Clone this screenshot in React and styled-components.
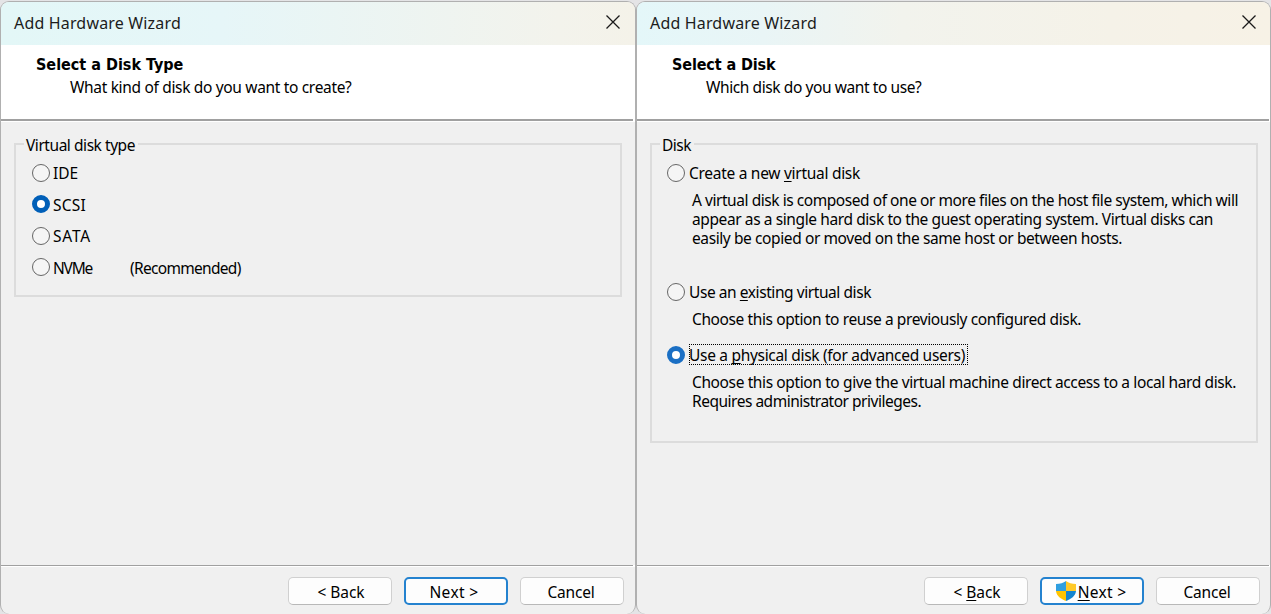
import React from "react";
import styled, { createGlobalStyle } from "styled-components";

const Global = createGlobalStyle`
  * { box-sizing: border-box; }
  body { margin: 0; background: #e4e4e6; overflow: hidden; }
  p, h1, h2 { margin: 0; font-weight: 400; }
`;

const Desktop = styled.main`
  display: flex;
  height: 614px;
  padding-top: 1px;
  color: #000;
  font: 15.5px/19px "Noto Sans", "Open Sans", sans-serif;
  white-space: nowrap;
`;

const Window = styled.section`
  width: ${(p) => p.$width}px;
  height: 613px;
  display: flex;
  flex-direction: column;
  border: 1px solid #b0b0b0;
  border-bottom: 0;
  border-radius: 9px;
  background: #f0f0f0;
  overflow: hidden;
`;

const TitleBar = styled.header`
  height: 43px;
  flex: none;
  display: flex;
  align-items: center;
  padding: 0 0 3px 13px;
  background: ${(p) => p.$tint};
`;

const Title = styled.h1`
  width: 591px;
  padding-top: 1px;
  font-size: 16px;
  line-height: 20px;
  letter-spacing: 0.17px;
  color: #1c1c1c;
`;

const Heading = styled.div`
  height: 74px;
  flex: none;
  padding: 10px 0 0 35px;
  background: #fff;
`;

const Rule = styled.div`
  flex: none;
  width: 634px;
  height: ${(p) => p.$size + 1}px;
  border-right: 2px solid #fff;
  border-bottom: 1px solid #fff;
  background: #a0a0a0;
`;

const HeadingTitle = styled.h2`
  font: 700 16px/19px "DejaVu Sans Condensed", "DejaVu Sans", sans-serif;
  letter-spacing: ${(p) => p.$track || 0}px;
`;

const HeadingText = styled.p`
  padding: 4px 0 0 34px;
  letter-spacing: ${(p) => p.$track}px;
`;

const Body = styled.div`
  flex: 1;
  padding: 13px 12px 0 13px;
`;

const Group = styled.fieldset`
  width: 608px;
  height: ${(p) => p.$height}px;
  min-width: 0;
  margin: 0;
  padding: 0;
  border: 2px solid #dcdcdc;
`;

const Legend = styled.legend`
  height: 18px;
  line-height: 20px;
  margin-left: 8px;
  padding: 0 3px 0 2px;
  letter-spacing: ${(p) => p.$track}px;
`;

const Stack = styled.div`
  display: flex;
  flex-direction: column;
  padding: 10px 0 0 ${(p) => p.$left}px;
  gap: ${(p) => p.$gap || 0}px;
`;

const Option = styled.label`
  display: flex;
  align-items: center;
  height: 19px;
`;

const OptionText = styled.span`
  letter-spacing: ${(p) => p.$track}px;
  margin: ${(p) => p.$top || 1}px 0 0 ${(p) => p.$left || 3}px;
`;

const FocusText = styled(OptionText)`
  height: 21px;
  line-height: 22px;
  width: 279px;
  margin: 0 0 0 4px;
  outline: 1px dotted #000;
  outline-offset: -1px;
`;

const Note = styled.span`
  margin: 2px 0 0 38px;
  letter-spacing: -0.7px;
`;

const Radio = styled.i`
  width: 18px;
  height: 18px;
  flex: none;
  border-radius: 50%;
  border: ${(p) => (p.$on ? "5px solid " + p.$on : "1px solid #666")};
  background: ${(p) => (p.$on ? "#fff" : "#f5f5f5")};
`;

const Description = styled.div`
  padding: 9px 0 ${(p) => p.$bottom}px 25px;
`;

const Line = styled.p`
  height: 19px;
  letter-spacing: ${(p) => p.$track}px;
`;

const Key = styled.span`
  text-decoration: underline;
  text-decoration-thickness: 1px;
  text-underline-offset: 2px;
  text-decoration-skip-ink: none;
`;

const Footer = styled.footer`
  height: 47px;
  flex: none;
  display: flex;
  gap: 12px;
  padding: 10px 0 0 287px;
`;

const Button = styled.button`
  width: 104px;
  height: 28px;
  flex: none;
  display: flex;
  align-items: center;
  justify-content: center;
  gap: 2px;
  margin: 0;
  padding: 2px ${(p) => p.$right || 0}px 0 ${(p) => p.$left || 0}px;
  border: ${(p) => (p.$primary ? "2px solid #2482cf" : "1px solid #d0d0d0")};
  ${(p) => !p.$primary && "border-bottom-color: #b8b8b8;"}
  border-radius: 5px;
  background: #fdfdfd;
  color: #000;
  font: inherit;
  letter-spacing: ${(p) => p.$track}px;
`;

const Icon = styled.svg`
  display: block;
  flex: none;
`;

const ShieldIcon = styled(Icon)`
  margin-bottom: 2px;
`;

const CloseIcon = () => (
  <Icon width="16" height="16" viewBox="0 0 16 16" fill="none" stroke="#1a1a1a" strokeWidth="1.3">
    <path d="M1.500 1.500 14.500 14.500M14.500 1.500 1.500 14.500" />
  </Icon>
);

const Shield = () => (
  <ShieldIcon width="20" height="20" viewBox="0 0 20 20">
    <path d="M10 0C7.500 2 4 3 0 3v7h10z" fill="#2f9fe0" />
    <path d="M10 0c2.500 2 6 3 10 3v7H10z" fill="#ffc928" />
    <path d="M0 10h10v10C5 18 .5 15 0 10z" fill="#ffc400" />
    <path d="M20 10H10v10c5-2 9.500-5 10-10z" fill="#1585cf" />
  </ShieldIcon>
);

function Wizard({ width, tint, heading, headingTrack, text, textTrack, children, buttons }) {
  return (
    <Window $width={width}>
      <TitleBar $tint={tint}>
        <Title>Add Hardware Wizard</Title>
        <CloseIcon />
      </TitleBar>
      <Heading>
        <HeadingTitle $track={headingTrack}>{heading}</HeadingTitle>
        <HeadingText $track={textTrack}>{text}</HeadingText>
      </Heading>
      <Rule $size={2} />
      <Body>{children}</Body>
      <Rule $size={1} />
      <Footer>{buttons}</Footer>
    </Window>
  );
}

const diskTypes = [
  { name: "IDE", track: -0.07 },
  { name: "SCSI", track: 0.2, selected: true },
  { name: "SATA", track: 0.8 },
  { name: "NVMe", track: -1.2, note: "(Recommended)" },
];

export default function App() {
  return (
    <>
      <Global />
      <Desktop>
        <Wizard
          width={636}
          tint="linear-gradient(90deg, #e3f7f7, #e6f6f8 35%, #f3f3ec 88%, #f4f2e9)"
          heading="Select a Disk Type"
          text="What kind of disk do you want to create?"
          textTrack={-0.33}
          buttons={
            <>
              <Button $track={-0.06} $left={2}>&lt; Back</Button>
              <Button $primary $track={0.35} $right={4}>Next &gt;</Button>
              <Button $track={-0.2} $right={2}>Cancel</Button>
            </>
          }
        >
          <Group $height={162}>
            <Legend $track={-0.45}>Virtual disk type</Legend>
            <Stack $left={16} $gap={12.5}>
              {diskTypes.map((t) => (
                <Option key={t.name}>
                  <Radio $on={t.selected && "#005fb8"} />
                  <OptionText $top={2} $track={t.track}>{t.name}</OptionText>
                  {t.note && <Note>{t.note}</Note>}
                </Option>
              ))}
            </Stack>
          </Group>
        </Wizard>
        <Wizard
          width={635}
          tint="linear-gradient(90deg, #e4f7f9, #e9f5f6 20%, #f2f3ed 42%, #f5f2e8 75%, #f7f2e6)"
          heading="Select a Disk"
          headingTrack={-0.12}
          text="Which disk do you want to use?"
          textTrack={-0.41}
          buttons={
            <>
              <Button $track={-0.06} $left={2}><span>&lt; <Key>B</Key>ack</span></Button>
              <Button $primary $track={0.3} $right={2}><Shield /><span><Key>N</Key>ext &gt;</span></Button>
              <Button $track={-0.2} $right={2}>Cancel</Button>
            </>
          }
        >
          <Group $height={308}>
            <Legend $track={-0.5}>Disk</Legend>
            <Stack $left={15}>
              <Option>
                <Radio />
                <OptionText $left={4} $track={-0.283}>Create a new <Key>v</Key>irtual disk</OptionText>
              </Option>
              <Description $bottom={34}>
                <Line $track={-0.447}>A virtual disk is composed of one or more files on the host file system, which will</Line>
                <Line $track={-0.4}>appear as a single hard disk to the guest operating system. Virtual disks can</Line>
                <Line $track={-0.403}>easily be copied or moved on the same host or between hosts.</Line>
              </Description>
              <Option>
                <Radio />
                <OptionText $left={4} $track={-0.43}>Use an <Key>e</Key>xisting virtual disk</OptionText>
              </Option>
              <Description $bottom={16}>
                <Line $track={-0.397}>Choose this option to reuse a previously configured disk.</Line>
              </Description>
              <Option>
                <Radio $on="#1a6fc4" />
                <FocusText $track={-0.307}>Use a <Key>p</Key>hysical disk (for advanced users)</FocusText>
              </Option>
              <Description $bottom={0}>
                <Line $track={-0.384}>Choose this option to give the virtual machine direct access to a local hard disk.</Line>
                <Line $track={-0.488}>Requires administrator privileges.</Line>
              </Description>
            </Stack>
          </Group>
        </Wizard>
      </Desktop>
    </>
  );
}
